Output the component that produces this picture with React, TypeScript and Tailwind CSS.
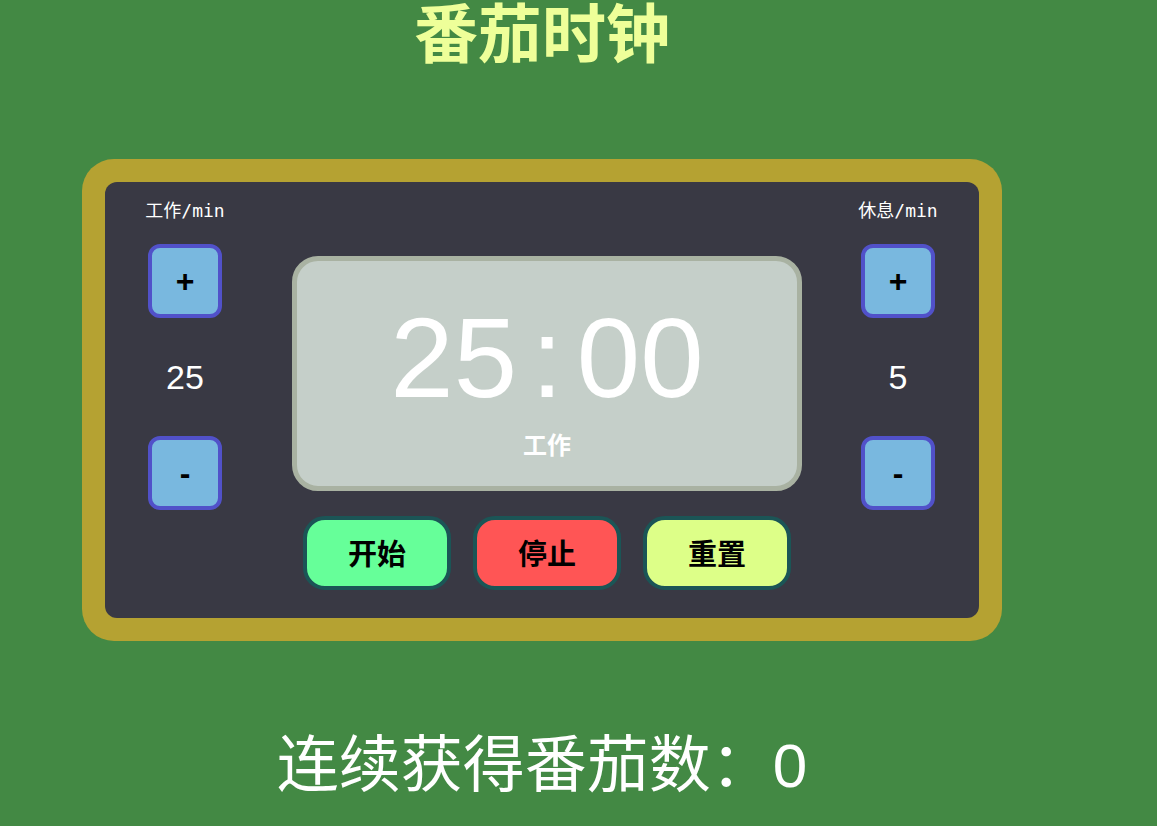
import React from 'react';

function StepButton({ label }: { label: string }) {
  return (
    <button className="w-[74px] h-[74px] rounded-[12px] border-4 border-[#5151c9] bg-[#79b8df] flex items-center justify-center text-black text-[32px] leading-none font-bold font-['Liberation_Sans',sans-serif]">
      {label}
    </button>
  );
}

function Setting({ title, value }: { title: string; value: number }) {
  return (
    <div className="w-[74px] pt-[17px] flex flex-col items-center">
      <div className="h-[24px] leading-[24px] text-[18px] text-white whitespace-nowrap font-['DejaVu_Sans_Mono','Noto_Sans_CJK_SC',monospace]">
        {title}
      </div>
      <div className="mt-[21px]">
        <StepButton label="+" />
      </div>
      <div className="h-[118px] flex items-center justify-center text-white text-[34px] font-['Liberation_Sans',sans-serif]">
        {value}
      </div>
      <StepButton label="-" />
    </div>
  );
}

function ActionButton({ children, color }: { children: React.ReactNode; color: string }) {
  return (
    <button
      className={`w-[148px] h-[74px] rounded-[22px] border-4 border-[#1b5556] ${color} flex items-center justify-center text-black text-[29px] font-bold font-['Noto_Sans_CJK_SC',sans-serif]`}
    >
      {children}
    </button>
  );
}

export default function App() {
  return (
    <div className="w-full h-[826px] bg-[#438944] overflow-hidden font-['Liberation_Sans','Noto_Sans_CJK_SC',sans-serif]">
      <div className="w-[920px] ml-[82px]">
        <h1 className="text-center text-[64px] leading-[58px] font-bold text-[#eeff99] font-['Noto_Sans_CJK_SC',sans-serif]">
          番茄时钟
        </h1>

        <div className="mt-[101px] rounded-[32px] bg-[#b5a232] p-[23px]">
          <div className="h-[436px] rounded-[12px] bg-[#393944] flex pl-[43px]">
            <Setting title="工作/min" value={25} />

            <div className="ml-[70px] w-[510px] pt-[74px] flex flex-col items-center">
              <div className="w-[510px] h-[235px] rounded-[26px] border-[5px] border-[#a9b2a2] bg-[#c5cfc9] flex flex-col items-center pt-[40px]">
                <div className="flex items-start text-white text-[114px] leading-[114px] font-['Liberation_Sans',sans-serif]">
                  <span>25</span>
                  <span className="mx-[14px]">:</span>
                  <span>00</span>
                </div>
                <div className="mt-[13px] text-white text-[24px] leading-[32px] font-bold font-['Noto_Sans_CJK_SC',sans-serif]">
                  工作
                </div>
              </div>
              <div className="mt-[25px] flex gap-[22px]">
                <ActionButton color="bg-[#66ff99]">开始</ActionButton>
                <ActionButton color="bg-[#ff5555]">停止</ActionButton>
                <ActionButton color="bg-[#ddff88]">重置</ActionButton>
              </div>
            </div>

            <div className="ml-[59px]">
              <Setting title="休息/min" value={5} />
            </div>
          </div>
        </div>

        <div className="mt-[94px] text-center text-white text-[62px] leading-[62px] font-['Liberation_Sans','Noto_Sans_CJK_SC',sans-serif]">
          连续获得番茄数：0
        </div>
      </div>
    </div>
  );
}
